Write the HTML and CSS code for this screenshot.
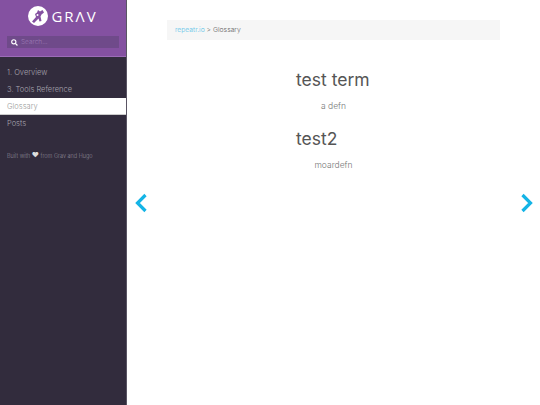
FILE: index.html
```html
<!DOCTYPE html>
<html lang="en">
<head>
<meta charset="utf-8">
<title>Glossary</title>
<link rel="stylesheet" href="styles.css">
</head>
<body>
<aside class="sidebar">
  <header class="side-head">
    <a class="logo" href="#">
      <svg class="logo-mark" viewBox="0 0 20 20" width="20" height="20">
        <circle cx="10" cy="10" r="10" fill="#fff"/>
        <path d="M4 15.500 8 11 7 8 9 6.500 10 4 12 5.500 14.500 4 16 6.500 13.500 8.500 12.500 10.500 13.500 15 11.500 15.500 10.500 12.500 6 17Z" fill="#8451a1"/>
        <circle cx="9.500" cy="9" r="1" fill="#fff"/>
      </svg>
      <span class="logo-text">GRΛV</span>
    </a>
    <div class="search">
      <svg class="search-icon" viewBox="0 0 10 10" width="7" height="7">
        <circle cx="4" cy="4" r="3" fill="none" stroke="#fff" stroke-width="1.6"/>
        <path d="M6.200 6.200 9.200 9.200" stroke="#fff" stroke-width="1.800"/>
      </svg>
      <span class="search-text">Search...</span>
    </div>
  </header>
  <nav class="menu">
    <a class="item" href="#">1. Overview</a>
    <a class="item" href="#">3. Tools Reference</a>
    <a class="item active" href="#">Glossary</a>
    <a class="item" href="#">Posts</a>
  </nav>
  <p class="footer">Built with <span class="heart">♥</span> from Grav and Hugo</p>
</aside>
<main class="main">
  <div class="crumbs"><a class="crumb-link" href="#">repeatr.io</a> &gt; Glossary</div>
  <dl class="defs">
    <dt class="term first">test term</dt>
    <dd class="defn">a defn</dd>
    <dt class="term">test2</dt>
    <dd class="defn">moardefn</dd>
  </dl>
  <a class="nav prev" href="#" aria-label="Previous">
    <svg viewBox="0 0 14 20" width="14" height="20"><path d="M11.500 2 3.500 10 11.500 18" fill="none" stroke="#14b4e6" stroke-width="3.200"/></svg>
  </a>
  <a class="nav next" href="#" aria-label="Next">
    <svg viewBox="0 0 14 20" width="14" height="20"><path d="M2.500 2 10.500 10 2.500 18" fill="none" stroke="#14b4e6" stroke-width="3.200"/></svg>
  </a>
</main>
</body>
</html>
```
FILE: styles.css
```css
* { box-sizing: border-box; }
html, body { margin: 0; height: 100%; }
body {
  display: flex;
  width: 540px;
  height: 405px;
  overflow: hidden;
  font-family: Inter, "Noto Sans", "Liberation Sans", sans-serif;
  font-weight: 300;
  background: #fff;
}
a { text-decoration: none; color: inherit; }

.sidebar {
  flex: 0 0 126px;
  background: #322c3d;
  color: #ccc;
}
.side-head {
  height: 57px;
  background: #8451a1;
  border-bottom: 1px solid #9c6cb8;
  padding-top: 6px;
}
.logo {
  display: flex;
  align-items: center;
  justify-content: center;
  gap: 3px;
  height: 20px;
}
.logo-text {
  font-family: "Open Sans", sans-serif;
  font-size: 15px;
  font-weight: 400;
  letter-spacing: 2px;
  color: #fff;
}
.search {
  display: flex;
  align-items: center;
  gap: 3px;
  height: 12px;
  margin: 10px 7px 0;
  padding-left: 4px;
  background: #6f4a8a;
}
.search-text {
  font-size: 6.500px;
  color: #9a78b2;
}
.menu {
  display: flex;
  flex-direction: column;
  padding-top: 7px;
}
.item {
  height: 17px;
  line-height: 18px;
  padding-left: 7px;
  font-size: 7.500px;
  color: #a9a5b0;
}
.item.active {
  background: #fff;
  color: #9a9a9a;
  border-bottom: 1px solid #ccc;
}
.footer {
  margin: 20px 0 0 7px;
  font-size: 5.500px;
  line-height: 8px;
  color: #8f8b98;
}
.heart { color: #ddd; font-size: 7px; line-height: 6px; }

.main {
  position: relative;
  flex: 1;
  border-left: 1px solid #5a5564;
  padding: 20px 40px 0;
}
.crumbs {
  height: 20px;
  line-height: 20px;
  padding-left: 8px;
  background: #f6f6f6;
  font-size: 6.800px;
  color: #666;
}
.crumb-link { color: #5fc4e8; }
.defs { margin: 29px 0 0; text-align: center; }
.term {
  width: 75px;
  margin-left: 129px;
  margin-top: 16px;
  text-align: left;
  white-space: nowrap;
  font-size: 17.500px;
  line-height: 22px;
  font-weight: 400;
  color: #555;
}
.term.first { margin-top: 0; }
.defn {
  margin: 9px 0 0;
  font-size: 8.500px;
  line-height: 12px;
  color: #777;
}
.nav {
  position: absolute;
  top: 193px;
  display: block;
  width: 14px;
  height: 20px;
}
.prev { left: 7px; }
.next { right: 6px; }
```
